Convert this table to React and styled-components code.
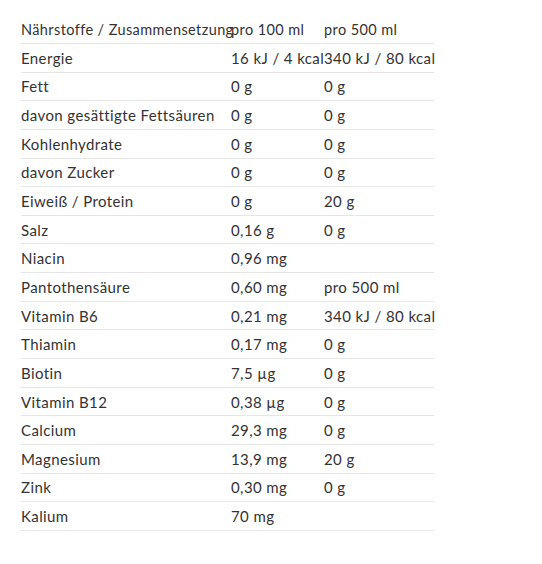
import React from "react";
import styled, { createGlobalStyle } from "styled-components";

const Global = createGlobalStyle`
  html, body { margin: 0; padding: 0; background: #ffffff; }
  body { font-family: Lato, "Open Sans", sans-serif; color: #333333; }
`;

const Page = styled.div`
  padding: 16px 0 0 21px;
`;

const Table = styled.table`
  border-collapse: collapse;
  table-layout: fixed;
  width: 413px;
  font-size: 15px;
  letter-spacing: 0.4px;
`;

const Col = styled.col`
  width: ${(p) => p.$w}px;
`;

const Row = styled.tr`
  border-bottom: 1px solid #e6e6e6;
`;

const Cell = styled.td`
  padding: 0;
  height: 27.65px;
  line-height: 18px;
  vertical-align: middle;
  white-space: nowrap;
  text-align: left;
  font-weight: 400;
  color: #333333;
  font-size: 15px;
`;

const HeadCell = styled(Cell).attrs({ as: "th" })`
  font-size: 14.5px;
  height: 27px;
`;

const rows = [
  ["Energie", "16 kJ / 4 kcal", "340 kJ / 80 kcal"],
  ["Fett", "0 g", "0 g"],
  ["davon gesättigte Fettsäuren", "0 g", "0 g"],
  ["Kohlenhydrate", "0 g", "0 g"],
  ["davon Zucker", "0 g", "0 g"],
  ["Eiweiß / Protein", "0 g", "20 g"],
  ["Salz", "0,16 g", "0 g"],
  ["Niacin", "0,96 mg", ""],
  ["Pantothensäure", "0,60 mg", "pro 500 ml"],
  ["Vitamin B6", "0,21 mg", "340 kJ / 80 kcal"],
  ["Thiamin", "0,17 mg", "0 g"],
  ["Biotin", "7,5 µg", "0 g"],
  ["Vitamin B12", "0,38 µg", "0 g"],
  ["Calcium", "29,3 mg", "0 g"],
  ["Magnesium", "13,9 mg", "20 g"],
  ["Zink", "0,30 mg", "0 g"],
  ["Kalium", "70 mg", ""],
];

export default function App() {
  return (
    <Page>
      <Global />
      <Table>
        <colgroup>
          <Col $w={210} />
          <Col $w={93} />
          <Col $w={110} />
        </colgroup>
        <thead>
          <Row>
            <HeadCell>Nährstoffe / Zusammensetzung</HeadCell>
            <HeadCell>pro 100 ml</HeadCell>
            <HeadCell>pro 500 ml</HeadCell>
          </Row>
        </thead>
        <tbody>
          {rows.map((r, i) => (
            <Row key={i}>
              <Cell>{r[0]}</Cell>
              <Cell>{r[1]}</Cell>
              <Cell>{r[2]}</Cell>
            </Row>
          ))}
        </tbody>
      </Table>
    </Page>
  );
}
